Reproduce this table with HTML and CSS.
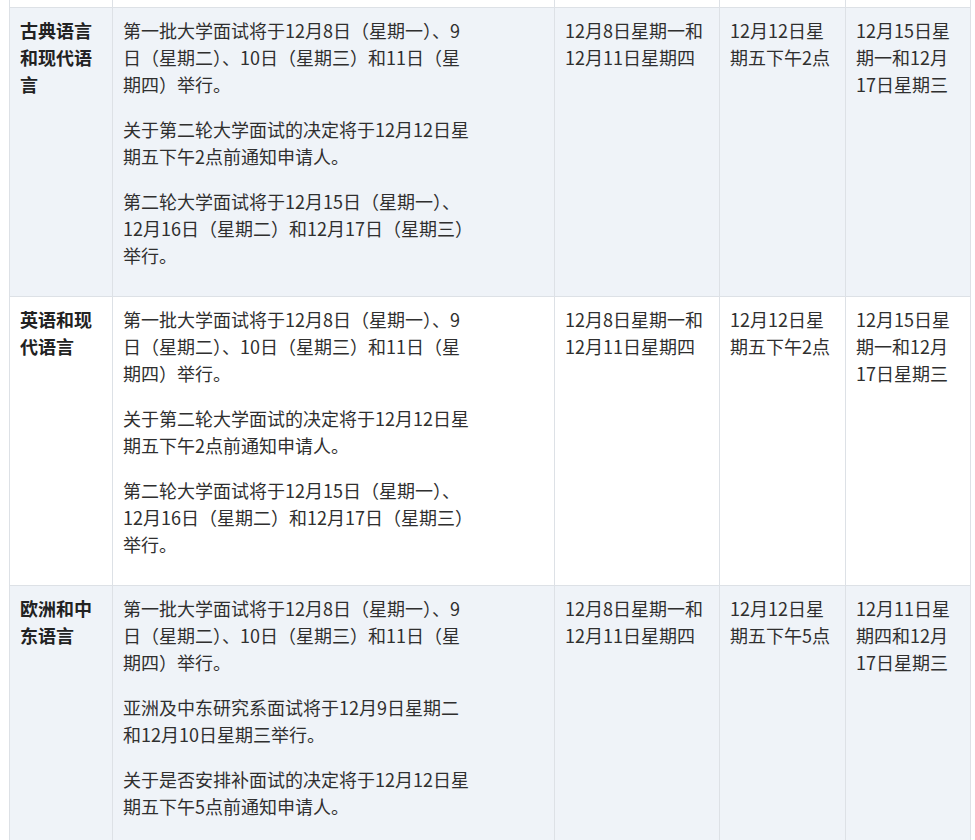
FILE: index.html
```html
<!DOCTYPE html>
<html lang="zh-CN">
<head>
<meta charset="utf-8">
<title>面试日期</title>
<link rel="stylesheet" href="styles.css">
</head>
<body>
<div class="wrap">
<table class="schedule">
  <colgroup>
    <col class="c1"><col class="c2"><col class="c3"><col class="c4"><col class="c5">
  </colgroup>
  <tbody>
    <tr class="prev"><td></td><td></td><td></td><td></td><td></td></tr>
    <tr class="alt">
      <th>古典语言和现代语言</th>
      <td>
        <p>第一批大学面试将于12月8日（星期一）、9日（星期二）、10日（星期三）和11日（星期四）举行。</p>
        <p>关于第二轮大学面试的决定将于12月12日星期五下午2点前通知申请人。</p>
        <p>第二轮大学面试将于12月15日（星期一）、12月16日（星期二）和12月17日（星期三）举行。</p>
      </td>
      <td><p>12月8日星期一和12月11日星期四</p></td>
      <td><p>12月12日星期五下午2点</p></td>
      <td><p>12月15日星期一和12月17日星期三</p></td>
    </tr>
    <tr>
      <th>英语和现代语言</th>
      <td>
        <p>第一批大学面试将于12月8日（星期一）、9日（星期二）、10日（星期三）和11日（星期四）举行。</p>
        <p>关于第二轮大学面试的决定将于12月12日星期五下午2点前通知申请人。</p>
        <p>第二轮大学面试将于12月15日（星期一）、12月16日（星期二）和12月17日（星期三）举行。</p>
      </td>
      <td><p>12月8日星期一和12月11日星期四</p></td>
      <td><p>12月12日星期五下午2点</p></td>
      <td><p>12月15日星期一和12月17日星期三</p></td>
    </tr>
    <tr class="alt">
      <th>欧洲和中东语言</th>
      <td>
        <p>第一批大学面试将于12月8日（星期一）、9日（星期二）、10日（星期三）和11日（星期四）举行。</p>
        <p>亚洲及中东研究系面试将于12月9日星期二和12月10日星期三举行。</p>
        <p>关于是否安排补面试的决定将于12月12日星期五下午5点前通知申请人。</p>
        <p>第二轮大学面试将于12月15日（星期一）、12月16日（星期二）和12月17日（星期三）举行。</p>
      </td>
      <td><p>12月8日星期一和12月11日星期四</p></td>
      <td><p>12月12日星期五下午5点</p></td>
      <td><p>12月11日星期四和12月17日星期三</p></td>
    </tr>
  </tbody>
</table>
</div>
</body>
</html>
```
FILE: styles.css
```css
html, body {
  margin: 0;
  padding: 0;
  background: #ffffff;
  overflow: hidden;
}
.wrap {
  padding-left: 9px;
}
.schedule {
  border-collapse: collapse;
  table-layout: fixed;
  width: 961px;
  font-family: "Noto Sans CJK SC", "Noto Sans", sans-serif;
  font-size: 18px;
  line-height: 27px;
  color: #2f2f2f;
}
.c1 { width: 103px; }
.c2 { width: 442px; }
.c3 { width: 165px; }
.c4 { width: 126px; }
.c5 { width: 125px; }
.schedule th,
.schedule td {
  border: 1px solid #dde1e6;
  padding: 9px 10px;
  vertical-align: top;
  text-align: left;
}
.schedule th {
  font-weight: 700;
  color: #222;
}
.schedule tr.prev td {
  height: 7px;
  padding: 0;
  border-top: none;
}
.schedule tr.alt th,
.schedule tr.alt td {
  background: #eff3f8;
}
.schedule p {
  margin: 0 0 18px;
  max-width: 350px;
}
```
